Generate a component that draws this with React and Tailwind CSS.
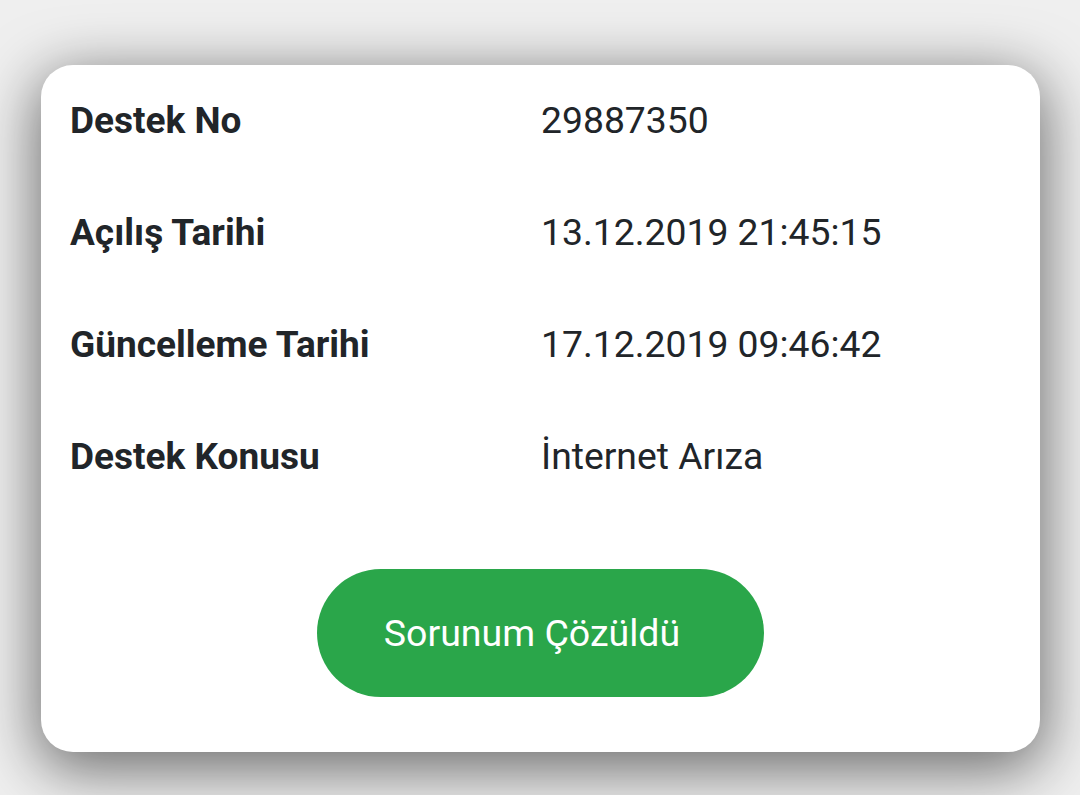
import React from "react";

const rows = [
    { label: "Destek No", value: "29887350" },
    { label: "Açılış Tarihi", value: "13.12.2019 21:45:15" },
    { label: "Güncelleme Tarihi", value: "17.12.2019 09:46:42" },
    { label: "Destek Konusu", value: "İnternet Arıza" },
];

export default function App() {
    return (
        <div
            className="min-h-[795px] w-[1080px] overflow-hidden bg-[#efefef] pt-[65px] pl-[41px]"
            style={{ fontFamily: "Roboto, 'Noto Sans', sans-serif" }}
        >
            <div className="w-[999px] h-[687px] bg-white rounded-[32px] shadow-[0_14px_60px_4px_rgba(0,0,0,0.55)] flex flex-col">
                {/* bilgi satırları */}
                <div className="flex flex-col">
                    {rows.map((row) => (
                        <div key={row.label} className="h-[112px] flex items-center pl-[29px]">
                            <div className="w-[471px] text-[37px] font-bold text-[#212529]">
                                {row.label}
                            </div>
                            <div className="text-[37.3px] text-[#212529]">{row.value}</div>
                        </div>
                    ))}
                </div>
                <div className="flex justify-center pt-[56px]">
                    <button
                        type="button"
                        className="w-[447px] h-[128px] rounded-full bg-[#2aa64a] text-white text-[37.5px] pr-[17px]"
                    >
                        Sorunum Çözüldü
                    </button>
                </div>
            </div>
        </div>
    );
}
